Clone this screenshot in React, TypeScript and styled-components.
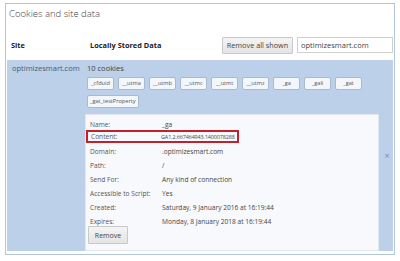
import React from 'react';
import styled, { createGlobalStyle } from 'styled-components';

const GlobalStyle = createGlobalStyle`
  html, body {
    margin: 0;
    padding: 0;
    background: #ffffff;
    font-family: 'Open Sans', 'Noto Sans', sans-serif;
    color: #333;
  }
`;

const COOKIES = ['_cfduid', '__utma', '__utmb', '__utmc', '__utmt', '__utmz', '_ga', '_gali', '_gat', '_gat_testProperty'];

const DETAILS: [string, string][] = [
  ['Domain:', '.optimizesmart.com'],
  ['Path:', '/'],
  ['Send For:', 'Any kind of connection'],
  ['Accessible to Script:', 'Yes'],
  ['Created:', 'Saturday, 9 January 2016 at 16:19:44'],
  ['Expires:', 'Monday, 8 January 2018 at 16:19:44'],
];

export default function App() {
  return (
    <>
      <GlobalStyle />
      <Frame>
        <Title>Cookies and site data</Title>
        <HeaderRow>
          <HeadCell>Site</HeadCell>
          <HeadCell>Locally Stored Data</HeadCell>
          <Tools>
            <Button>Remove all shown</Button>
            <Search defaultValue="optimizesmart.com" />
          </Tools>
        </HeaderRow>
        <SiteRow>
          <SiteName>optimizesmart.com</SiteName>
          <DataColumn>
            <Count>10 cookies</Count>
            <Chips>
              {COOKIES.map((c) => (
                <Chip key={c}>{c}</Chip>
              ))}
            </Chips>
            <Details>
              <DetailRow>
                <Label>Name:</Label>
                <Value>_ga</Value>
              </DetailRow>
              <Highlight>
                <Label>Content:</Label>
                <Value $compact>GA1.2.667464943.1400078288</Value>
              </Highlight>
              <DetailList>
                {DETAILS.map(([k, v]) => (
                  <DetailRow key={k} $tall>
                    <Label>{k}</Label>
                    <Value>{v}</Value>
                  </DetailRow>
                ))}
              </DetailList>
              <SmallButton>Remove</SmallButton>
            </Details>
          </DataColumn>
          <Close>×</Close>
        </SiteRow>
      </Frame>
    </>
  );
}

const Frame = styled.div`
  margin: 3px 5px 0 5px;
  border: 1px solid #b4c6da;
  display: flex;
  flex-direction: column;
  padding: 0 1px 3px 1px;
  box-sizing: border-box;
  width: 390px;
  height: 252px;
`;

const Title = styled.div`
  font-size: 9.5px;
  font-weight: 300;
  color: #444;
  padding: 3px 0 0 2px;
  height: 26px;
  box-sizing: border-box;
`;

const HeaderRow = styled.div`
  display: grid;
  grid-template-columns: 79px 1fr auto;
  align-items: center;
  height: 30px;
  padding-left: 4px;
`;

const HeadCell = styled.div`
  font-size: 7.4px;
  font-weight: 700;
  color: #222;
`;

const Tools = styled.div`
  display: flex;
  align-items: center;
  gap: 4px;
`;

const Button = styled.button`
  height: 17px;
  width: 71px;
  padding: 0;
  font-family: inherit;
  font-size: 7.3px;
  color: #444;
  background: linear-gradient(#f4f4f4, #e4e4e4);
  border: 1px solid #c9c9c9;
  border-radius: 1px;
`;

const Search = styled.input`
  width: 96px;
  height: 16px;
  box-sizing: border-box;
  padding: 0 3px;
  font-family: inherit;
  font-size: 7.5px;
  color: #444;
  border: 1px solid #cfcfcf;
  outline: none;
`;

const SiteRow = styled.div`
  flex: 1;
  display: grid;
  grid-template-columns: 78px 1fr 16px;
  background: #bcd0ea;
`;

const SiteName = styled.div`
  font-size: 7.5px;
  color: #4a5a70;
  padding: 3px 0 0 5px;
`;

const DataColumn = styled.div`
  display: flex;
  flex-direction: column;
`;

const Count = styled.div`
  font-size: 7.5px;
  color: #444;
  padding: 3px 0 0 2px;
  height: 17px;
  box-sizing: border-box;
`;

const Chips = styled.div`
  display: flex;
  flex-wrap: wrap;
  gap: 5px 4px;
  padding-left: 2px;
  width: 292px;
`;

const Chip = styled.div`
  min-width: 27px;
  height: 13px;
  padding: 0 2px;
  font-size: 5.6px;
  line-height: 11px;
  text-align: center;
  color: #555;
  background: #f3f6fb;
  border: 1px solid #a9b9cf;
  border-radius: 2px;
  box-sizing: border-box;
`;

const Details = styled.div`
  margin-top: 6px;
  flex: 1;
  background: #f8f9fc;
  border: 1px solid #e2e6ee;
  padding: 3px 0 3px 0;
  display: flex;
  flex-direction: column;
  align-items: flex-start;
`;

const DetailList = styled.div`
  margin-top: 1px;
  display: flex;
  flex-direction: column;
`;

const DetailRow = styled.div<{ $tall?: boolean }>`
  display: grid;
  grid-template-columns: 72px 1fr;
  height: ${(p) => (p.$tall ? '14px' : '12px')};
  align-items: center;
  padding-left: 4px;
`;

const Highlight = styled.div`
  display: grid;
  grid-template-columns: 70px 1fr;
  align-items: center;
  width: 153px;
  height: 13px;
  padding-left: 3px;
  border: 2px solid #c3202b;
  box-sizing: border-box;
`;

const Label = styled.span`
  font-size: 6.6px;
  color: #555;
  white-space: nowrap;
`;

const Value = styled.span<{ $compact?: boolean }>`
  font-size: ${(p) => (p.$compact ? '5.4px' : '6.6px')};
  letter-spacing: ${(p) => (p.$compact ? '-0.1px' : '0')};
  color: #444;
  white-space: nowrap;
`;

const SmallButton = styled.button`
  margin: -2px 0 0 2px;
  height: 18px;
  width: 40px;
  padding: 0;
  font-family: inherit;
  font-size: 7px;
  color: #444;
  background: linear-gradient(#f4f4f4, #e4e4e4);
  border: 1px solid #c9c9c9;
  border-radius: 1px;
`;

const Close = styled.div`
  font-size: 9px;
  color: #7d8ea6;
  display: flex;
  justify-content: center;
  align-items: center;
`;
